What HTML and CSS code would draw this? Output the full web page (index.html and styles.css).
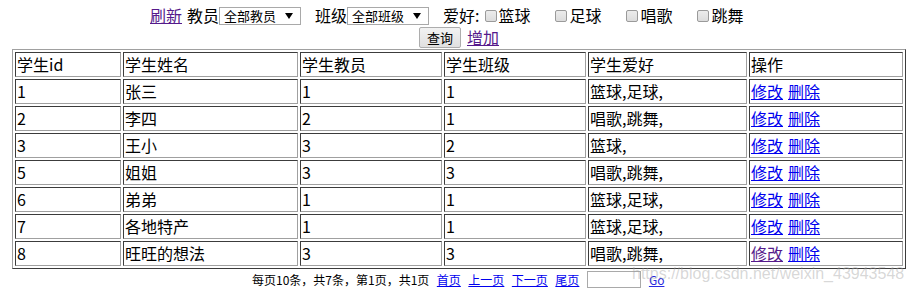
FILE: index.html
```html
<!DOCTYPE html>
<html lang="zh">
<head>
<meta charset="utf-8">
<title>学生管理</title>
<link rel="stylesheet" href="styles.css">
</head>
<body>
<div class="page">
  <form class="filters">
    <div class="row1">
      <a class="lnk visited refresh" href="#">刷新</a>
      <span class="lbl l-teacher">教员</span>
      <span class="sel"><select><option>全部教员</option></select></span>
      <span class="lbl l-class">班级</span>
      <span class="sel"><select><option>全部班级</option></select></span>
      <span class="lbl l-hobby">爱好:</span>
      <input type="checkbox" class="cb cb-first"><span class="cbl cbl-first">篮球</span>
      <input type="checkbox" class="cb"><span class="cbl">足球</span>
      <input type="checkbox" class="cb"><span class="cbl">唱歌</span>
      <input type="checkbox" class="cb"><span class="cbl">跳舞</span>
    </div>
    <div class="row2">
      <button type="button" class="btn">查询</button>
      <a class="lnk visited add" href="#">增加</a>
    </div>
  </form>

  <table class="grid">
    <tr>
      <td class="c1">学生id</td>
      <td class="c2">学生姓名</td>
      <td class="c3">学生教员</td>
      <td class="c4">学生班级</td>
      <td class="c5">学生爱好</td>
      <td class="c6">操作</td>
    </tr>
    <tr><td>1</td><td>张三</td><td>1</td><td>1</td><td>篮球,足球,</td><td><a class="lnk" href="#">修改</a><a class="lnk del" href="#">删除</a></td></tr>
    <tr><td>2</td><td>李四</td><td>2</td><td>1</td><td>唱歌,跳舞,</td><td><a class="lnk" href="#">修改</a><a class="lnk del" href="#">删除</a></td></tr>
    <tr><td>3</td><td>王小</td><td>3</td><td>2</td><td>篮球,</td><td><a class="lnk" href="#">修改</a><a class="lnk del" href="#">删除</a></td></tr>
    <tr><td>5</td><td>姐姐</td><td>3</td><td>3</td><td>唱歌,跳舞,</td><td><a class="lnk" href="#">修改</a><a class="lnk del" href="#">删除</a></td></tr>
    <tr><td>6</td><td>弟弟</td><td>1</td><td>1</td><td>篮球,足球,</td><td><a class="lnk" href="#">修改</a><a class="lnk del" href="#">删除</a></td></tr>
    <tr><td>7</td><td>各地特产</td><td>1</td><td>1</td><td>篮球,足球,</td><td><a class="lnk" href="#">修改</a><a class="lnk del" href="#">删除</a></td></tr>
    <tr><td>8</td><td>旺旺的想法</td><td>3</td><td>3</td><td>唱歌,跳舞,</td><td><a class="lnk visited" href="#">修改</a><a class="lnk del" href="#">删除</a></td></tr>
  </table>

  <div class="pager">
    <span class="info">每页10条，共7条，第1页，共1页</span>
    <a class="plink" href="#">首页</a>
    <a class="plink" href="#">上一页</a>
    <a class="plink" href="#">下一页</a>
    <a class="plink" href="#">尾页</a>
    <input type="text" class="pinput">
    <a class="plink go" href="#">Go</a>
  </div>

  <div class="watermark">https://blog.csdn.net/weixin_43943548</div>
</div>
</body>
</html>
```

FILE: styles.css
```css
html, body {
  margin: 0;
  padding: 0;
  background: #ffffff;
}

body {
  font-family: "Noto Sans CJK SC", "Noto Sans", sans-serif;
  color: #000000;
  font-size: 16px;
}

.page {
  position: relative;
  width: 913px;
  height: 293px;
  overflow: hidden;
}

.filters {
  margin: 0;
}

.row1 {
  display: flex;
  align-items: center;
  height: 21px;
  padding-top: 5px;
  padding-left: 150px;
  line-height: 21px;
}

.lnk {
  color: #0000ee;
  text-decoration: underline;
}

.lnk.visited {
  color: #551a8b;
}

.lbl {
  display: inline-block;
}

.l-teacher {
  margin-left: 5px;
}

.l-class {
  margin-left: 14px;
}

.l-hobby {
  margin-left: 14px;
}

.sel {
  position: relative;
  display: inline-block;
  height: 18px;
}

.sel select {
  appearance: none;
  -webkit-appearance: none;
  box-sizing: border-box;
  width: 82px;
  height: 18px;
  margin: 0;
  padding: 0 0 0 4px;
  border: 1px solid #a9a9a9;
  border-radius: 0;
  background: #ffffff;
  color: #000000;
  font-family: "Noto Sans CJK SC", sans-serif;
  font-size: 13px;
  line-height: 16px;
  display: block;
}

.sel::after {
  content: "";
  position: absolute;
  right: 8px;
  top: 6px;
  width: 0;
  height: 0;
  border-left: 4.5px solid transparent;
  border-right: 4.5px solid transparent;
  border-top: 6px solid #000000;
  pointer-events: none;
}

.cb {
  appearance: none;
  -webkit-appearance: none;
  box-sizing: border-box;
  width: 12px;
  height: 12px;
  margin: 0 3px 0 24px;
  border: 1px solid #9a9a9a;
  border-radius: 2px;
  background: linear-gradient(#ececec, #dcdcdc);
}

.cb.cb-first {
  margin-left: 5px;
  margin-right: 2px;
}

.row2 {
  display: flex;
  align-items: center;
  height: 21px;
  margin-top: 1px;
  padding-left: 419px;
}

.btn {
  box-sizing: border-box;
  width: 42px;
  height: 21px;
  margin: 0;
  padding: 0;
  border: 1px solid #adadad;
  border-radius: 2px;
  background: linear-gradient(#f2f2f2, #e0e0e0);
  color: #000000;
  font-family: "Noto Sans CJK SC", sans-serif;
  font-size: 13px;
  line-height: 19px;
}

.add {
  margin-left: 6px;
  line-height: 21px;
}

.grid {
  border-collapse: separate;
  border-spacing: 2px;
  border: 1px solid;
  border-color: #a0a0a0 #3c3c3c #3c3c3c #a0a0a0;
  margin: 1px 0 0 12px;
  width: 894px;
  table-layout: fixed;
}

.grid td {
  box-sizing: border-box;
  height: 25px;
  padding: 0 1px;
  border: 1px solid;
  border-color: #3c3c3c #a0a0a0 #a0a0a0 #3c3c3c;
  font-size: 16px;
  line-height: 21px;
  white-space: nowrap;
  vertical-align: middle;
  text-align: left;
}

.grid .c1 { width: 106px; }
.grid .c2 { width: 175px; }
.grid .c3 { width: 142px; }
.grid .c4 { width: 142px; }
.grid .c5 { width: 159px; }
.grid .c6 { width: 154px; }

.del {
  margin-left: 5px;
}

.pager {
  display: flex;
  align-items: center;
  height: 17px;
  margin-top: 2px;
  padding-left: 252px;
  font-size: 12px;
  line-height: 17px;
}

.plink {
  margin-left: 7.5px;
  color: #0000ee;
  text-decoration: underline;
}

.plink.go {
  margin-left: 8px;
  color: #2a2ae0;
}

.pinput {
  box-sizing: border-box;
  width: 54px;
  height: 17px;
  margin: 0 0 0 7.5px;
  padding: 0;
  border: 1px solid #a9a9a9;
  background: #ffffff;
}

.watermark {
  position: absolute;
  left: 632px;
  top: 265px;
  font-family: "Liberation Sans", Arial, sans-serif;
  font-size: 16px;
  line-height: 18px;
  color: rgba(160, 160, 160, 0.42);
  white-space: nowrap;
  pointer-events: none;
}
```
